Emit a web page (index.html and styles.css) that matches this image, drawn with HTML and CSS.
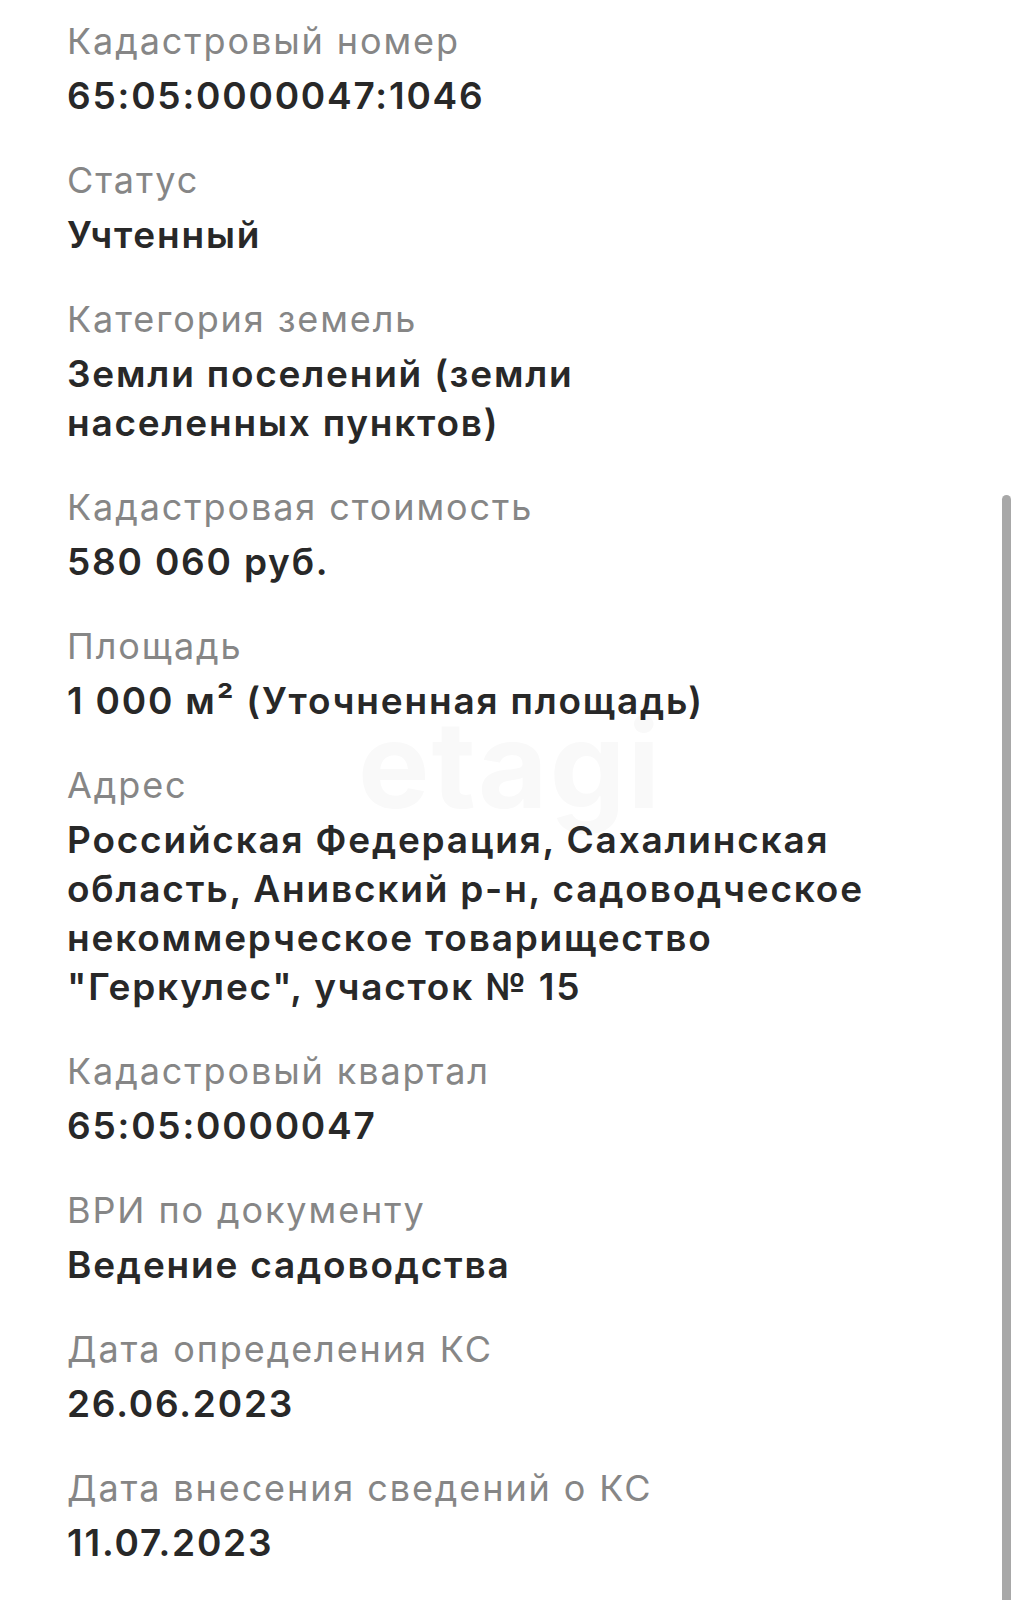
FILE: index.html
```html
<!DOCTYPE html>
<html lang="ru">
<head>
<meta charset="utf-8">
<title>Кадастровые сведения</title>
<link rel="stylesheet" href="styles.css">
</head>
<body>
<div class="page">
  <div class="watermark" aria-hidden="true">etagi</div>
  <dl class="list">
    <div class="item"><dt class="label">Кадастровый номер</dt><dd class="value">65:05:0000047:1046</dd></div>
    <div class="item"><dt class="label">Статус</dt><dd class="value">Учтенный</dd></div>
    <div class="item"><dt class="label">Категория земель</dt><dd class="value">Земли поселений (земли<br>населенных пунктов)</dd></div>
    <div class="item"><dt class="label">Кадастровая стоимость</dt><dd class="value">580 060 руб.</dd></div>
    <div class="item"><dt class="label">Площадь</dt><dd class="value">1 000 м² (Уточненная площадь)</dd></div>
    <div class="item"><dt class="label">Адрес</dt><dd class="value">Российская Федерация, Сахалинская<br>область, Анивский р-н, садоводческое<br>некоммерческое товарищество<br>"Геркулес", участок № 15</dd></div>
    <div class="item"><dt class="label">Кадастровый квартал</dt><dd class="value">65:05:0000047</dd></div>
    <div class="item"><dt class="label">ВРИ по документу</dt><dd class="value">Ведение садоводства</dd></div>
    <div class="item"><dt class="label">Дата определения КС</dt><dd class="value">26.06.2023</dd></div>
    <div class="item"><dt class="label">Дата внесения сведений о КС</dt><dd class="value">11.07.2023</dd></div>
  </dl>
  <div class="scrollbar"></div>
</div>
</body>
</html>
```
FILE: styles.css
```css
html, body {
  margin: 0;
  padding: 0;
  background: #ffffff;
}
.page {
  position: relative;
  width: 1019px;
  height: 1600px;
  overflow: hidden;
  font-family: Inter, "Noto Sans", "Liberation Sans", sans-serif;
}
.list {
  position: relative;
  margin: 0;
  padding: 21px 0 0 67px;
  display: flex;
  flex-direction: column;
  gap: 40px;
}
.item {
  display: flex;
  flex-direction: column;
  gap: 10px;
}
.label {
  margin: 0;
  font-size: 36px;
  line-height: 40px;
  font-weight: 400;
  letter-spacing: 1.9px;
  color: #868686;
}
.value {
  margin: 0;
  font-size: 37px;
  line-height: 49px;
  font-weight: 600;
  letter-spacing: 1.8px;
  color: #282828;
}
.watermark {
  position: absolute;
  left: 358px;
  top: 705px;
  font-size: 120px;
  font-weight: 700;
  letter-spacing: 2px;
  color: #f9f9f9;
  line-height: 1;
  pointer-events: none;
}
.scrollbar {
  position: absolute;
  left: 1002px;
  top: 495px;
  width: 9px;
  height: 1120px;
  border-radius: 5px;
  background: #a8a8a8;
}
```
